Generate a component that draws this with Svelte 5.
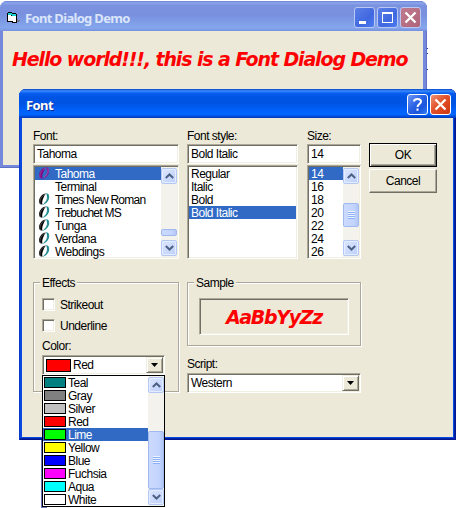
<script>
  const fonts = [
    { name: 'Tahoma', ot: true, sel: true },
    { name: 'Terminal', ot: false },
    { name: 'Times New Roman', ot: true },
    { name: 'Trebuchet MS', ot: true },
    { name: 'Tunga', ot: true },
    { name: 'Verdana', ot: true },
    { name: 'Webdings', ot: true }
  ];
  const styles = ['Regular', 'Italic', 'Bold', 'Bold Italic'];
  const sizes = [14, 16, 18, 20, 22, 24, 26];
  const colors = [
    ['Teal', '#008080'], ['Gray', '#808080'], ['Silver', '#c0c0c0'], ['Red', '#ff0000'],
    ['Lime', '#00ff00'], ['Yellow', '#ffff00'], ['Blue', '#0000ff'], ['Fuchsia', '#ff00ff'],
    ['Aqua', '#00ffff'], ['White', '#ffffff']
  ];
</script>

{#snippet scrollbar(top, height, grip)}
  <div class="sb">
    <div class="sbtn"><svg width="9" height="6" viewBox="0 0 9 6"><path d="M.8 5 4.5 1.5 8.2 5" /></svg></div>
    <div class="track">
      <div class="thumb" style="margin-top:{top}px;height:{height}px">
        {#if grip}<i></i><i></i><i></i><i></i>{/if}
      </div>
    </div>
    <div class="sbtn"><svg width="9" height="6" viewBox="0 0 9 6"><path d="M.8 1 4.5 4.5 8.2 1" /></svg></div>
  </div>
{/snippet}

{#snippet arrow()}
  <div class="arrow"><svg width="7" height="4" viewBox="0 0 7 4"><path d="M0 0h7L3.5 4z" /></svg></div>
{/snippet}

<div class="screen">
  <div class="specks"><i></i><i></i><i></i></div>
  <section class="parent">
    <header class="ptitle">
      <svg class="app" width="14" height="12" viewBox="0 0 14 12" shape-rendering="crispEdges">
        <path d="M10 7h1v1h2v1h-1v1h-2z" fill="#6e7684" />
        <path d="M0 1h4v1h6v9H5v-1H0z" fill="#000" />
        <path d="M1 0h4v1h4v1H1z" fill="#000" />
        <path d="M1 3h3v1h5v6H6V9H1z" fill="#fff" />
        <path d="M1 1h4v1h4v1h0v1H5V3H1z" fill="#19d3d3" />
      </svg>
      <span class="pt">Font Dialog Demo</span>
      <div class="caps">
        <b class="cap"><svg viewBox="0 0 19 19"><path d="M4 13h7v3H4z" fill="#fff" /></svg></b>
        <b class="cap"><svg viewBox="0 0 19 19" shape-rendering="crispEdges"><path d="M4 4h11v11H4zM5 6v8h9V6z" fill="#fff" fill-rule="evenodd" /></svg></b>
        <b class="cap dimred"><svg viewBox="0 0 19 19"><path d="m4.5 4.500 10 10m0-10-10 10" stroke="#fff" stroke-width="2.300" /></svg></b>
      </div>
    </header>
    <div class="pbody"><span class="hello">Hello world!!!, this is a Font Dialog Demo</span></div>
  </section>

  <section class="dialog">
    <header class="dtitle">
      <span>Font</span>
      <div class="caps">
        <b class="cap bright"><svg viewBox="0 0 19 19"><path d="M6 6.500C6 3 13 3 13 6.500c0 2.500-3.500 2.500-3.500 5.500M9.500 13.500v2.300" fill="none" stroke="#fff" stroke-width="2" /></svg></b>
        <b class="cap red"><svg viewBox="0 0 19 19"><path d="m4.500 4.500 10 10m0-10-10 10" stroke="#fff" stroke-width="2.300" /></svg></b>
      </div>
    </header>
    <div class="dbody">
      <div class="row top">
        <div class="col cfont">
          <label for="f">Font:</label>
          <div class="field" id="f">Tahoma</div>
          <div class="list">
            <div class="items">
              {#each fonts as f}
                <div class="item fi" class:sel={f.sel}>
                  <span class="ic">
                    {#if f.ot}
                      <svg width="12" height="12" viewBox="0 0 12 12">
                        <path d="M8 .5C4 .5 1 5 1 8.500 1 11 2.500 11.500 4.500 11.500 3.800 10 4.300 7 5.800 4 6.600 2.200 7.500 1.200 8 .5z" fill={f.sel ? '#800080' : '#000'} />
                        <path d="M8 .3c1.700 0 3.200 .8 3.200 3.500 0 3.500-3 7.900-7.200 7.900 2-.7 3.500-2.200 4.400-4.400C9.400 4.800 9.200 2 8 .3z" fill={f.sel ? '#8a1796' : '#00878c'} />
                        <path d="M7.500 1C4.500 1.800 1.800 6 1.800 9c0 1 .3 1.700.9 2M10 1.500c1 3-1.500 7-4 8.800" fill="none" stroke={f.sel ? '#a98bc0' : '#a0a0a0'} stroke-width=".5" />
                      </svg>
                    {/if}
                  </span><span class:wide={f.name.length > 10}>{f.name}</span>
                </div>
              {/each}
            </div>
            {@render scrollbar(45, 7, false)}
          </div>
        </div>
        <div class="col cstyle">
          <label for="s">Font style:</label>
          <div class="field" id="s">Bold Italic</div>
          <div class="list">
            <div class="items">
              {#each styles as s}<div class="item" class:sel={s === 'Bold Italic'}>{s}</div>{/each}
            </div>
          </div>
        </div>
        <div class="col csize">
          <label for="z">Size:</label>
          <div class="field" id="z">14</div>
          <div class="list">
            <div class="items">
              {#each sizes as s}<div class="item" class:sel={s === 14}>{s}</div>{/each}
            </div>
            {@render scrollbar(19, 24, true)}
          </div>
        </div>
        <div class="buttons">
          <div class="btn def">OK</div>
          <div class="btn">Cancel</div>
        </div>
      </div>

      <div class="row lower">
        <div class="group effects">
          <span class="legend">Effects</span>
          <div class="check"><i></i>Strikeout</div>
          <div class="check"><i></i>Underline</div>
          <div class="clabel">Color:</div>
          <div class="combo ccombo">
            <span class="swatch big" style="background:#f00"></span><span class="val">Red</span>
            {@render arrow()}
          </div>
        </div>
        <div class="right">
          <div class="group sample">
            <span class="legend">Sample</span>
            <div class="sbox"><span>AaBbYyZz</span></div>
          </div>
          <div class="slabel">Script:</div>
          <div class="combo scombo"><span class="val">Western</span>{@render arrow()}</div>
        </div>
      </div>
    </div>
  </section>

  <div class="shade"></div>
  <div class="drop">
    <div class="items">
      {#each colors as [name, hex]}
        <div class="citem" class:sel={name === 'Lime'}>
          <span class="swatch" style="background:{hex}"></span><span class="ctext">{name}</span>
        </div>
      {/each}
    </div>
    {@render scrollbar(38, 58, true)}
  </div>
</div>

<style>
  .screen {
    position: relative; width: 456px; height: 508px; overflow: hidden; background: #fff; color: #000;
    font: 12px/13px "Liberation Sans", Arial, sans-serif; letter-spacing: -0.5px; white-space: nowrap;
  }
  .screen *, .screen { box-sizing: border-box; }
  svg { display: block; }
  .parent {
    position: absolute; left: 0; top: 1px; width: 427px; height: 167px; background: #7489dc;
    border-radius: 7px 7px 0 0; padding: 0 4px 3px 3px; box-shadow: inset -1px 0 #6072c8, inset 0 -1px #6072c8;
    display: flex; flex-direction: column;
  }
  .ptitle {
    height: 30px; flex: none; display: flex; align-items: center; margin: 0 -4px 0 -3px; padding: 0 6px 0 7px;
    border-radius: 7px 7px 0 0;
    background: linear-gradient(#6780d6 0, #8da6ec 6%, #7b92df 14%, #7890de 45%, #7f9fe8 75%, #86a6ec 90%, #7590df 100%);
  }
  .app { margin-top: 4px; }
  .pt { color: #dbe5fb; font: bold 13px/16px "Noto Sans", "Open Sans", sans-serif; letter-spacing: -0.68px; margin: 4px 0 0 4px; }
  .caps { margin-left: auto; display: flex; gap: 2px; }
  .cap {
    width: 21px; height: 21px; border: 1px solid #b9c8f2; border-radius: 3px; display: block;
    background: linear-gradient(135deg, #5c80e8, #4068e0 60%, #4c7cf0);
  }
  .ptitle .caps { margin-top: 3px; }
  .cap.dimred { background: linear-gradient(135deg, #c07b91, #b06478); }
  .cap.bright { border-color: #fff; background: linear-gradient(135deg, #6d97f5, #2a62e4 45%, #1b55dc 70%, #3480f8); }
  .cap.red { border-color: #fff; background: linear-gradient(135deg, #ef9478, #e2512a 45%, #d8421b 75%, #c43a14); }
  .pbody { flex: 1; background: #ece9d8; padding: 15px 0 0 9px; }
  .hello { font: italic bold 19px/26px "DejaVu Sans", Verdana, sans-serif; color: #f00; letter-spacing: -1.12px; display: block; }
  .specks { position: absolute; left: 427px; top: 48px; width: 1px; display: flex; flex-direction: column; }
  .specks i { width: 1px; height: 1px; background: #223a8c; margin-bottom: 4px; }
  .specks i:nth-child(2) { margin-bottom: 15px; }

  .dialog {
    position: absolute; left: 19px; top: 89px; width: 437px; height: 351px; border-radius: 7px 7px 0 0;
    background: #0b4ae0; padding: 0 3px 3px; display: flex; flex-direction: column;
    box-shadow: inset 1px 0 #0a38cc, inset -1px 0 #001a90, inset -2px 0 #0022a8, inset 0 -1px #001a90, inset 0 -2px #0022a8;
  }
  .dtitle {
    height: 29px; flex: none; margin: 0 -3px; padding: 0 5px 0 7px; border-radius: 7px 7px 0 0; display: flex; align-items: center;
    background: linear-gradient(#0848c8 0, #3a8cff 7%, #0a5ef0 14%, #0054e3 28%, #0054e3 50%, #0061fb 75%, #0065ff 88%, #0046d0 96%, #0038b8 100%);
  }
  .dtitle span { color: #fff; font: bold 13px/16px "Noto Sans", "Open Sans", sans-serif; letter-spacing: -0.6px; text-shadow: 1px 1px #0a2f96; margin-top: 3px; }
  .dtitle .caps { margin-top: 2px; }
  .dbody { flex: 1; background: #ece9d8; padding: 12px 0 0 11px; }
  .row { display: flex; align-items: flex-start; }
  .col { display: flex; flex-direction: column; margin-right: 8px; }
  .cfont { width: 146px; }
  .cstyle { width: 111px; margin-right: 9px; }
  .csize { width: 54px; margin-right: 8px; }
  label { height: 14px; display: block; }
  .field, .list, .combo, .check i, .sbox {
    border: 1px solid; border-color: #aca899 #fff #fff #aca899; box-shadow: inset 1px 1px #716f64, inset -1px -1px #f1efe2;
  }
  .field { height: 20px; background: #fff; padding: 3px 0 0 3px; }
  .list { height: 94px; margin-top: 1px; background: #fff; padding: 1px; display: flex; }
  .items { flex: 1; min-width: 0; }
  .item { height: 13px; line-height: 15px; padding-left: 2px; }
  .fi { display: flex; padding: 0; }
  .wide { letter-spacing: -0.75px; }
  .ic { width: 20px; padding-left: 3px; }
  .sel { background: #316ac5; color: #fff; }
  .sb { width: 16px; flex: none; background: #f3f2ec; display: flex; flex-direction: column; padding: 1px 0; }
  .sbtn {
    height: 16px; border: 1px solid #b4c8f6; border-radius: 2px; background: linear-gradient(135deg, #dbe5fe, #bdd0fb);
    display: flex; align-items: center; justify-content: center; box-shadow: inset 0 0 0 1px #e6edfe;
  }
  .sbtn path { fill: none; stroke: #4d6185; stroke-width: 2; }
  .track { flex: 1; overflow: hidden; }
  .thumb {
    border: 1px solid #9fb8ee; border-radius: 2px; background: linear-gradient(90deg, #cbdafd, #c3d4fd 70%, #b3c8f6);
    display: flex; flex-direction: column; align-items: center; justify-content: center; gap: 1px;
  }
  .thumb i { width: 7px; height: 1px; background: #8cb0f8; box-shadow: 0 -1px #eef4fe; }
  .buttons { display: flex; flex-direction: column; gap: 2px; margin-top: 13px; }
  .btn {
    width: 68px; height: 24px; border: 1px solid; border-color: #fff #716f64 #716f64 #fff; box-shadow: inset -1px -1px #aca899;
    display: flex; align-items: center; justify-content: center;
  }
  .def { border-color: #000; box-shadow: inset 1px 1px #fff, inset -1px -1px #716f64, inset -2px -2px #aca899; }
  .lower { margin-top: 23px; gap: 8px; }
  .group { border: 1px solid #aca899; box-shadow: 1px 1px #fff, inset 1px 1px #fff; padding: 0 0 0 8px; position: relative; }
  .legend { position: absolute; left: 6px; top: -6px; padding: 0 2px; background: #ece9d8; }
  .effects { width: 146px; height: 110px; padding-top: 15px; }
  .check { display: flex; height: 13px; line-height: 15px; margin-bottom: 8px; gap: 5px; }
  .check i { width: 13px; height: 13px; background: #fff; }
  .clabel { margin-top: 0; }
  .combo { height: 20px; background: #fff; display: flex; align-items: center; padding: 1px; }
  .ccombo { width: 123px; margin-top: 2px; }
  .swatch { width: 22px; height: 11px; border: 1px solid #000; flex: none; }
  .swatch.big { width: 25px; height: 13px; margin-left: 2px; }
  .val { margin-left: 2px; }
  .arrow {
    margin-left: auto; width: 17px; height: 16px; background: #ece9d8; border: 1px solid; border-color: #f1efe2 #716f64 #716f64 #f1efe2;
    box-shadow: inset 1px 1px #fff, inset -1px -1px #aca899; display: flex; align-items: center; justify-content: center;
  }
  .right { width: 174px; }
  .sample { height: 64px; padding: 15px 0 0 11px; }
  .sbox { width: 150px; height: 37px; display: flex; align-items: center; justify-content: center; }
  .sbox span { font: italic bold 19px/26px "DejaVu Sans", Verdana, sans-serif; color: #f00; letter-spacing: -1.3px; }
  .slabel { margin-top: 12px; }
  .scombo { margin-top: 2px; }
  .shade { position: absolute; left: 41px; top: 440px; width: 6px; height: 68px; background: #6c76bc; }
  .drop { position: absolute; left: 42px; top: 375px; width: 123px; height: 132px; border: 1px solid #000; background: #fff; display: flex; }
  .citem { height: 13px; display: flex; align-items: center; padding-left: 1px; }
  .ctext { margin-left: 2px; line-height: 15px; padding-top: 1px; }
</style>
